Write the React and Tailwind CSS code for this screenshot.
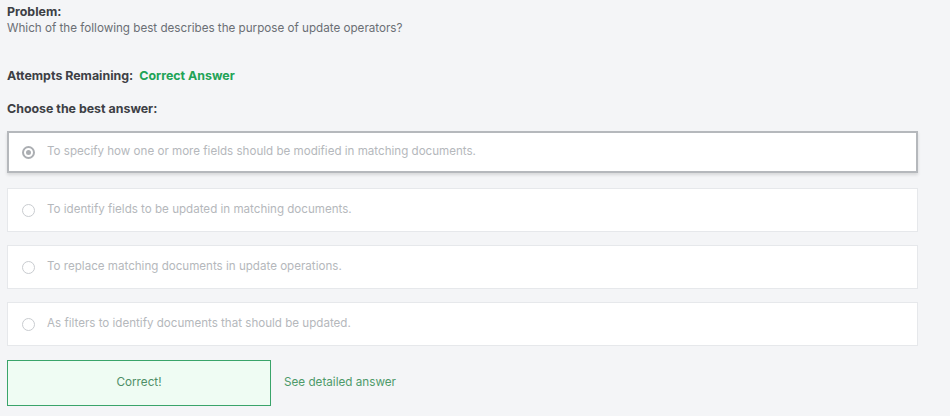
import React from 'react';

const options = [
  'To specify how one or more fields should be modified in matching documents.',
  'To identify fields to be updated in matching documents.',
  'To replace matching documents in update operations.',
  'As filters to identify documents that should be updated.',
];

const App = () => {
  const selected = 0;

  return (
    <div className="min-h-screen w-[950px] h-[416px] bg-[#f4f5f7] pl-[7px] pt-[4px] font-['Inter','Liberation_Sans',sans-serif] overflow-hidden">
      <div className="text-[12.4px] leading-[16px] font-bold text-[#3d4045]">Problem:</div>
      <div className="text-[11.65px] leading-[16px] text-[#6b6f75]">
        Which of the following best describes the purpose of update operators?
      </div>

      <div className="mt-[32px] flex items-center text-[12.4px] leading-[16px] font-bold">
        <span className="text-[#3d4045]">Attempts Remaining:</span>
        <span className="ml-[6px] text-[#21a356]">Correct Answer</span>
      </div>

      <div className="mt-[17px] text-[12.4px] leading-[16px] font-bold text-[#3d4045]">
        Choose the best answer:
      </div>

      <div className="mt-[14px] w-[911px] flex flex-col gap-[13px]">
        {options.map((text, i) => (
          <div
            key={i}
            className={
              i === selected
                ? 'h-[42px] mb-[2px] bg-white border-2 border-[#b5b8bc] shadow-[0_2px_3px_rgba(0,0,0,0.12)] flex items-center pl-[13px]'
                : 'h-[44px] bg-white border border-[#e6e8eb] flex items-center pl-[14px]'
            }
          >
            <span
              className={
                i === selected
                  ? 'w-[13px] h-[13px] rounded-full border-2 border-[#abaeb2] flex items-center justify-center'
                  : 'w-[13px] h-[13px] rounded-full border border-[#c9ccd0]'
              }
            >
              {i === selected && <span className="w-[5px] h-[5px] rounded-full bg-[#abaeb2]" />}
            </span>
            <span className="ml-[12px] text-[11.6px] text-[#b5b8bc]">{text}</span>
          </div>
        ))}
      </div>

      <div className="mt-[14px] flex items-center">
        <div className="w-[264px] h-[46px] border border-[#3aa46a] bg-[#effcf3] flex items-center justify-center text-[11.7px] text-[#4e8f66]">
          Correct!
        </div>
        <span className="ml-[13px] text-[11.7px] text-[#4e9a6a]">See detailed answer</span>
      </div>
    </div>
  );
};

export default App;
